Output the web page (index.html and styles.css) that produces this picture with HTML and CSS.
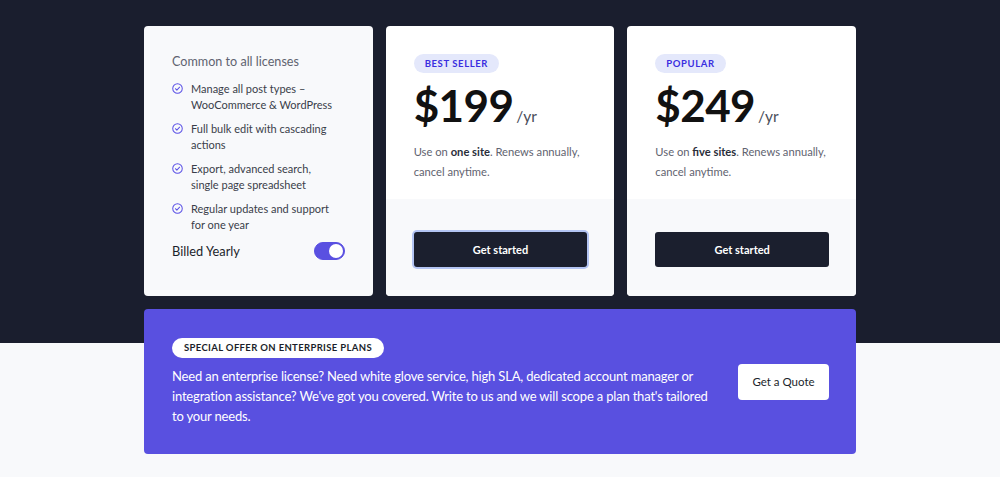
FILE: index.html
```html
<!DOCTYPE html>
<html lang="en">
<head>
    <meta charset="UTF-8">
    <meta name="viewport" content="width=device-width, initial-scale=1.0">
    <title>Pricing</title>
    <link rel="stylesheet" href="styles.css">
</head>
<body>
    <section class="pricing">
        <div class="plans">
            <div class="card common">
                <p class="common-title">Common to all licenses</p>
                <ul class="features">
                    <li><span class="check"><svg viewBox="0 0 12 12" width="11" height="11"><circle cx="6" cy="6" r="5.2" fill="none" stroke="#5b52e6" stroke-width="1.1"/><path d="M3.7 6.2l1.6 1.6 3-3.2" fill="none" stroke="#5b52e6" stroke-width="1.1" stroke-linecap="round" stroke-linejoin="round"/></svg></span>Manage all post types – WooCommerce &amp; WordPress</li>
                    <li><span class="check"><svg viewBox="0 0 12 12" width="11" height="11"><circle cx="6" cy="6" r="5.2" fill="none" stroke="#5b52e6" stroke-width="1.1"/><path d="M3.7 6.2l1.6 1.6 3-3.2" fill="none" stroke="#5b52e6" stroke-width="1.1" stroke-linecap="round" stroke-linejoin="round"/></svg></span>Full bulk edit with cascading actions</li>
                    <li><span class="check"><svg viewBox="0 0 12 12" width="11" height="11"><circle cx="6" cy="6" r="5.2" fill="none" stroke="#5b52e6" stroke-width="1.1"/><path d="M3.7 6.2l1.6 1.6 3-3.2" fill="none" stroke="#5b52e6" stroke-width="1.1" stroke-linecap="round" stroke-linejoin="round"/></svg></span>Export, advanced search, single page spreadsheet</li>
                    <li><span class="check"><svg viewBox="0 0 12 12" width="11" height="11"><circle cx="6" cy="6" r="5.2" fill="none" stroke="#5b52e6" stroke-width="1.1"/><path d="M3.7 6.2l1.6 1.6 3-3.2" fill="none" stroke="#5b52e6" stroke-width="1.1" stroke-linecap="round" stroke-linejoin="round"/></svg></span>Regular updates and support for one year</li>
                </ul>
                <div class="billing">
                    <span>Billed Yearly</span>
                    <span class="toggle"><span class="knob"></span></span>
                </div>
            </div>

            <div class="card plan">
                <div class="plan-top">
                    <span class="badge">BEST SELLER</span>
                    <div class="price"><span class="amount">$199</span><span class="period">/yr</span></div>
                    <p class="plan-desc">Use on <b>one site</b>. Renews annually, cancel anytime.</p>
                </div>
                <div class="plan-bottom">
                    <button class="btn-dark focused">Get started</button>
                </div>
            </div>

            <div class="card plan">
                <div class="plan-top">
                    <span class="badge">POPULAR</span>
                    <div class="price"><span class="amount">$249</span><span class="period">/yr</span></div>
                    <p class="plan-desc">Use on <b>five sites</b>. Renews annually, cancel anytime.</p>
                </div>
                <div class="plan-bottom">
                    <button class="btn-dark">Get started</button>
                </div>
            </div>
        </div>

        <div class="enterprise">
            <div class="enterprise-text">
                <span class="offer">SPECIAL OFFER ON ENTERPRISE PLANS</span>
                <p>Need an enterprise license? Need white glove service, high SLA, dedicated account manager or integration assistance? We've got you covered. Write to us and we will scope a plan that's tailored to your needs.</p>
            </div>
            <button class="btn-light">Get a Quote</button>
        </div>
    </section>
</body>
</html>
```

FILE: styles.css
```css
* {
    box-sizing: border-box;
}
body {
    margin: 0;
    font-family: "Lato", "Liberation Sans", sans-serif;
    background: linear-gradient(#1a1e2e 0, #1a1e2e 343px, #f8f9fb 343px);
    min-height: 477px;
    color: #1b1f2b;
}
.pricing {
    width: 712px;
    margin: 0 auto;
    padding-top: 26px;
}
.plans {
    display: grid;
    grid-template-columns: repeat(3, 1fr);
    gap: 13px;
}
.card {
    height: 270px;
    border-radius: 4px;
    background: #fff;
    overflow: hidden;
}
.common {
    background: #f8f9fb;
    padding: 28px 24px 0 28px;
}
.common-title {
    margin: 0 0 12px;
    font-size: 12.6px;
    color: #5f6370;
}
.features {
    list-style: none;
    margin: 0;
    padding: 0 10px 0 0;
}
.features li {
    display: flex;
    font-size: 11px;
    line-height: 16px;
    color: #3a3e4a;
    margin-bottom: 8px;
}
.check {
    flex: none;
    width: 19px;
    padding-top: 2px;
}
.check svg {
    display: block;
}
.billing {
    display: flex;
    justify-content: space-between;
    align-items: center;
    height: 20px;
    font-size: 12.8px;
    color: #1b1f2b;
    margin-top: 0;
    padding-right: 4px;
}
.toggle {
    width: 31px;
    height: 18px;
    border-radius: 9px;
    background: #5a50e1;
    border: 1px solid #5a50e1;
    display: flex;
    justify-content: flex-end;
    padding: 1px;
}
.knob {
    width: 14px;
    height: 14px;
    border-radius: 50%;
    background: #fff;
}
.plan {
    display: flex;
    flex-direction: column;
}
.plan-top {
    height: 173px;
    padding: 28px 28px 0 28px;
    display: flex;
    flex-direction: column;
    align-items: flex-start;
}
.badge {
    background: #e4e8fb;
    color: #3a2ee0;
    font-size: 9.5px;
    font-weight: 700;
    letter-spacing: 0.6px;
    padding: 0 11px;
    height: 19px;
    line-height: 19px;
    border-radius: 10px;
}
.price {
    margin-top: 9px;
    display: flex;
    align-items: baseline;
}
.amount {
    font-size: 44px;
    font-weight: 700;
    line-height: 46px;
    letter-spacing: -0.6px;
    color: #111;
}
.period {
    font-size: 15.5px;
    color: #4a4e5a;
    margin-left: 3px;
}
.plan-desc {
    margin: 14px 0 0;
    font-size: 11.2px;
    line-height: 19.5px;
    color: #5f6370;
}
.plan-desc b {
    color: #2a2e3a;
}
.plan-bottom {
    flex: 1;
    background: #f8f9fb;
    padding: 33px 27px 0 28px;
}
.btn-dark {
    width: 100%;
    height: 35px;
    border: none;
    border-radius: 3px;
    background: #1b1f2e;
    color: #fff;
    font-family: inherit;
    font-size: 11px;
    font-weight: 700;
}
.btn-dark.focused {
    box-shadow: 0 0 0 2px #b3c4f3;
}
.enterprise {
    margin-top: 13px;
    height: 145px;
    background: #5950e0;
    border-radius: 4px;
    display: flex;
    align-items: center;
    padding: 0 27px 0 28px;
    color: #fff;
}
.enterprise-text {
    width: 540px;
    display: flex;
    flex-direction: column;
    align-items: flex-start;
}
.offer {
    background: #fff;
    color: #1b1f2b;
    font-size: 9.5px;
    font-weight: 700;
    letter-spacing: 0.35px;
    height: 20px;
    line-height: 20px;
    padding: 0 12px;
    border-radius: 10px;
}
.enterprise-text p {
    margin: 8px 0 0;
    font-size: 13px;
    letter-spacing: -0.18px;
    line-height: 20px;
}
.btn-light {
    margin-left: auto;
    width: 91px;
    height: 36px;
    background: #fff;
    border: none;
    border-radius: 4px;
    color: #1b1f2b;
    font-family: inherit;
    font-size: 11.5px;
}
```
